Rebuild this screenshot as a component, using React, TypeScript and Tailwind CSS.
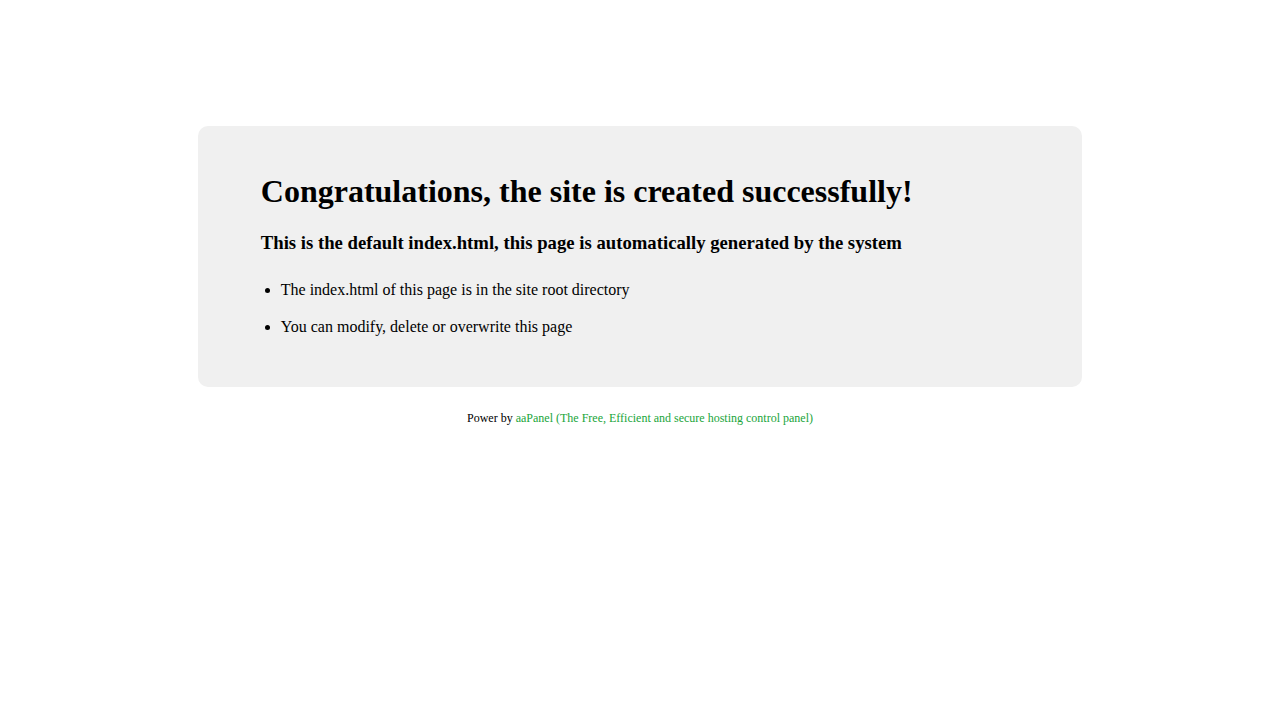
export default function App() {
  return (
    <div className="min-h-[720px] bg-white font-['Liberation_Serif',serif] text-black px-[8px] pt-[126.4px]">
      <div className="mx-auto w-[884.8px] bg-[#f0f0f0] rounded-[10px] px-[63.2px] pt-[25.28px] pb-[25.28px] flow-root">
        <h1 className="text-[32px] font-bold leading-[37.6px] mt-[21.44px] mb-[21.44px]">
          Congratulations, the site is created successfully!
        </h1>
        <h3 className="text-[18.72px] font-bold leading-[21.7px] mb-[16.9px]">
          This is the default index.html, this page is automatically generated by the system
        </h3>
        <ul className="list-disc pl-[20px] mb-[16px] text-[16px]">
          <li className="leading-[37.3px]">The index.html of this page is in the site root directory</li>
          <li className="leading-[37.3px]">You can modify, delete or overwrite this page</li>
        </ul>
      </div>
      <div className="text-center text-[12px] mt-[24.5px] leading-[14px]">
        Power by{" "}
        <a className="text-[#20a53a]">aaPanel (The Free, Efficient and secure hosting control panel)</a>
      </div>
    </div>
  );
}
